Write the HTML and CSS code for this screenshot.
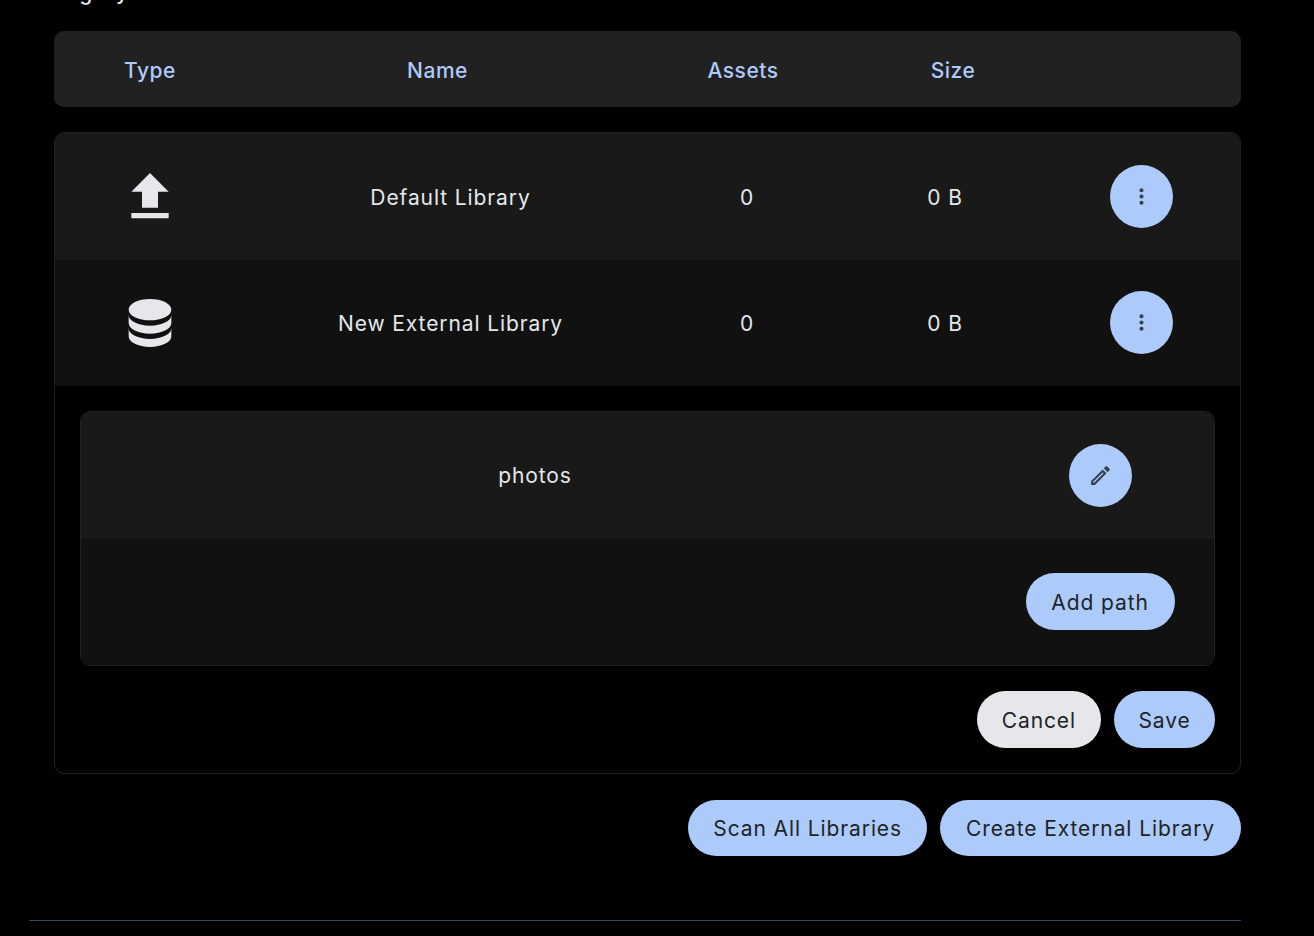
FILE: index.html
```html
<!DOCTYPE html>
<html lang="en">
<head>
  <meta charset="UTF-8" />
  <meta name="viewport" content="width=device-width, initial-scale=1.0" />
  <title>Libraries</title>
  <link rel="stylesheet" href="styles.css">
</head>
<body>
  <main class="page">
    <p class="cut-title">Category</p>

    <div class="table-head">
      <span class="head-cell">Type</span>
      <span class="head-cell">Name</span>
      <span class="head-cell">Assets</span>
      <span class="head-cell">Size</span>
    </div>

    <section class="library-box">
      <div class="library-row odd">
        <svg class="type-icon" viewBox="0 0 24 24"><path d="M9,16V10H5L12,3L19,10H15V16H9M5,20V18H19V20H5Z"/></svg>
        <span>Default Library</span>
        <span>0</span>
        <span>0 B</span>
        <button class="round-btn" aria-label="Options">
          <svg viewBox="0 0 24 24"><path d="M12,16A2,2 0 0,1 14,18A2,2 0 0,1 12,20A2,2 0 0,1 10,18A2,2 0 0,1 12,16M12,10A2,2 0 0,1 14,12A2,2 0 0,1 12,14A2,2 0 0,1 10,12A2,2 0 0,1 12,10M12,4A2,2 0 0,1 14,6A2,2 0 0,1 12,8A2,2 0 0,1 10,6A2,2 0 0,1 12,4Z"/></svg>
        </button>
      </div>
      <div class="library-row even">
        <svg class="type-icon" viewBox="0 0 24 24"><path d="M12,3C7.58,3 4,4.79 4,7C4,9.21 7.58,11 12,11C16.42,11 20,9.21 20,7C20,4.79 16.42,3 12,3M4,9V12C4,14.21 7.58,16 12,16C16.42,16 20,14.21 20,12V9C20,11.21 16.42,13 12,13C7.58,13 4,11.21 4,9M4,14V17C4,19.21 7.58,21 12,21C16.42,21 20,19.21 20,17V14C20,16.21 16.42,18 12,18C7.58,18 4,16.21 4,14Z"/></svg>
        <span>New External Library</span>
        <span>0</span>
        <span>0 B</span>
        <button class="round-btn" aria-label="Options">
          <svg viewBox="0 0 24 24"><path d="M12,16A2,2 0 0,1 14,18A2,2 0 0,1 12,20A2,2 0 0,1 10,18A2,2 0 0,1 12,16M12,10A2,2 0 0,1 14,12A2,2 0 0,1 12,14A2,2 0 0,1 10,12A2,2 0 0,1 12,10M12,4A2,2 0 0,1 14,6A2,2 0 0,1 12,8A2,2 0 0,1 10,6A2,2 0 0,1 12,4Z"/></svg>
        </button>
      </div>

      <div class="edit-area">
        <div class="path-box">
          <div class="path-row odd">
            <span>photos</span>
            <button class="round-btn" aria-label="Edit">
              <svg viewBox="0 0 24 24"><path d="M14.06,9L15,9.94L5.92,19H5V18.08L14.06,9M17.66,3C17.41,3 17.15,3.1 16.96,3.29L15.13,5.12L18.88,8.87L20.71,7.04C21.1,6.65 21.1,6 20.71,5.63L18.37,3.29C18.17,3.09 17.92,3 17.66,3M14.06,6.19L3,17.25V21H6.75L17.81,9.94L14.06,6.19Z"/></svg>
            </button>
          </div>
          <div class="path-row even">
            <span></span>
            <button class="pill-btn add-path">Add path</button>
          </div>
        </div>
        <div class="form-actions">
          <button class="pill-btn grey">Cancel</button>
          <button class="pill-btn save">Save</button>
        </div>
      </div>
    </section>

    <div class="page-actions">
      <button class="pill-btn">Scan All Libraries</button>
      <button class="pill-btn wide">Create External Library</button>
    </div>

    <hr class="divider">
  </main>
</body>
</html>
```
FILE: styles.css
```css
* {
  box-sizing: border-box;
}

body {
  margin: 0;
  height: 936px;
  overflow: hidden;
  background-color: #000;
  color: #e5e7eb;
  font-family: Inter, "Noto Sans", sans-serif;
  font-size: 21px;
  letter-spacing: 0.9px;
}

.page {
  width: 1241px;
  padding-left: 54px;
}

/* heading scrolled almost out of the window, only descenders show */
.cut-title {
  height: 24px;
  margin: -19px 0 0 -25px;
  line-height: 24px;
  font-weight: 500;
}

.table-head {
  display: grid;
  grid-template-columns: 192px 383px 228px 192px 1fr;
  align-items: center;
  height: 76px;
  padding-top: 2px;
  border-radius: 10px;
  background-color: #212121;
  text-align: center;
  margin-top: 26px;
}

.head-cell {
  color: #adcbfa;
  font-weight: 500;
  letter-spacing: 0.5px;
}

.library-box {
  margin-top: 25px;
  border: 1px solid #212121;
  border-radius: 10px;
  overflow: hidden;
}

.library-row {
  display: grid;
  grid-template-columns: 189px 413px 180px 216px 177px;
  align-items: center;
  justify-items: center;
  height: 127px;
  padding-right: 10px;
  text-align: center;
}

.library-row.odd span {
  padding-top: 2px;
}

.library-row.even {
  height: 126px;
}

.library-row.even .round-btn {
  margin-bottom: 1px;
}

.odd {
  background-color: #191919;
}

.even {
  background-color: #111;
}

.type-icon {
  width: 64px;
  height: 64px;
  fill: #e5e7eb;
}

.round-btn {
  display: flex;
  align-items: center;
  justify-content: center;
  width: 63px;
  height: 63px;
  padding: 0;
  border: none;
  border-radius: 50%;
  background-color: #adcbfa;
}

.round-btn svg {
  width: 25px;
  height: 25px;
  fill: #374151;
}

.edit-area {
  padding: 25px;
}

.path-box {
  border: 1px solid #212121;
  border-radius: 10px;
  overflow: hidden;
}

.path-row {
  display: grid;
  grid-template-columns: 908px 222px;
  align-items: center;
  justify-items: center;
  height: 127px;
}

.path-row.even {
  height: 126px;
}

.path-row.even .pill-btn {
  margin-bottom: 2px;
}

.pill-btn {
  height: 57px;
  padding: 2px 25px 0;
  border: none;
  border-radius: 29px;
  background-color: #adcbfa;
  color: #1f2328;
  font-family: inherit;
  font-size: 21px;
  font-weight: 400;
  letter-spacing: 0.9px;
}

.pill-btn.grey {
  background-color: #e5e7eb;
}

.pill-btn.add-path {
  width: 149px;
  padding-left: 0;
  padding-right: 0;
}

.pill-btn.save {
  width: 101px;
  padding-left: 0;
  padding-right: 0;
}

.form-actions {
  display: flex;
  justify-content: flex-end;
  gap: 13px;
  margin-top: 25px;
}

.page-actions {
  display: flex;
  justify-content: flex-end;
  gap: 13px;
  margin-top: 26px;
}

.page-actions .pill-btn {
  height: 56px;
  padding-top: 0;
}

.pill-btn.wide {
  width: 301px;
}

.divider {
  height: 1px;
  margin: 64px 0 0 -25px;
  border: none;
  background-color: #3b4662;
}
```
